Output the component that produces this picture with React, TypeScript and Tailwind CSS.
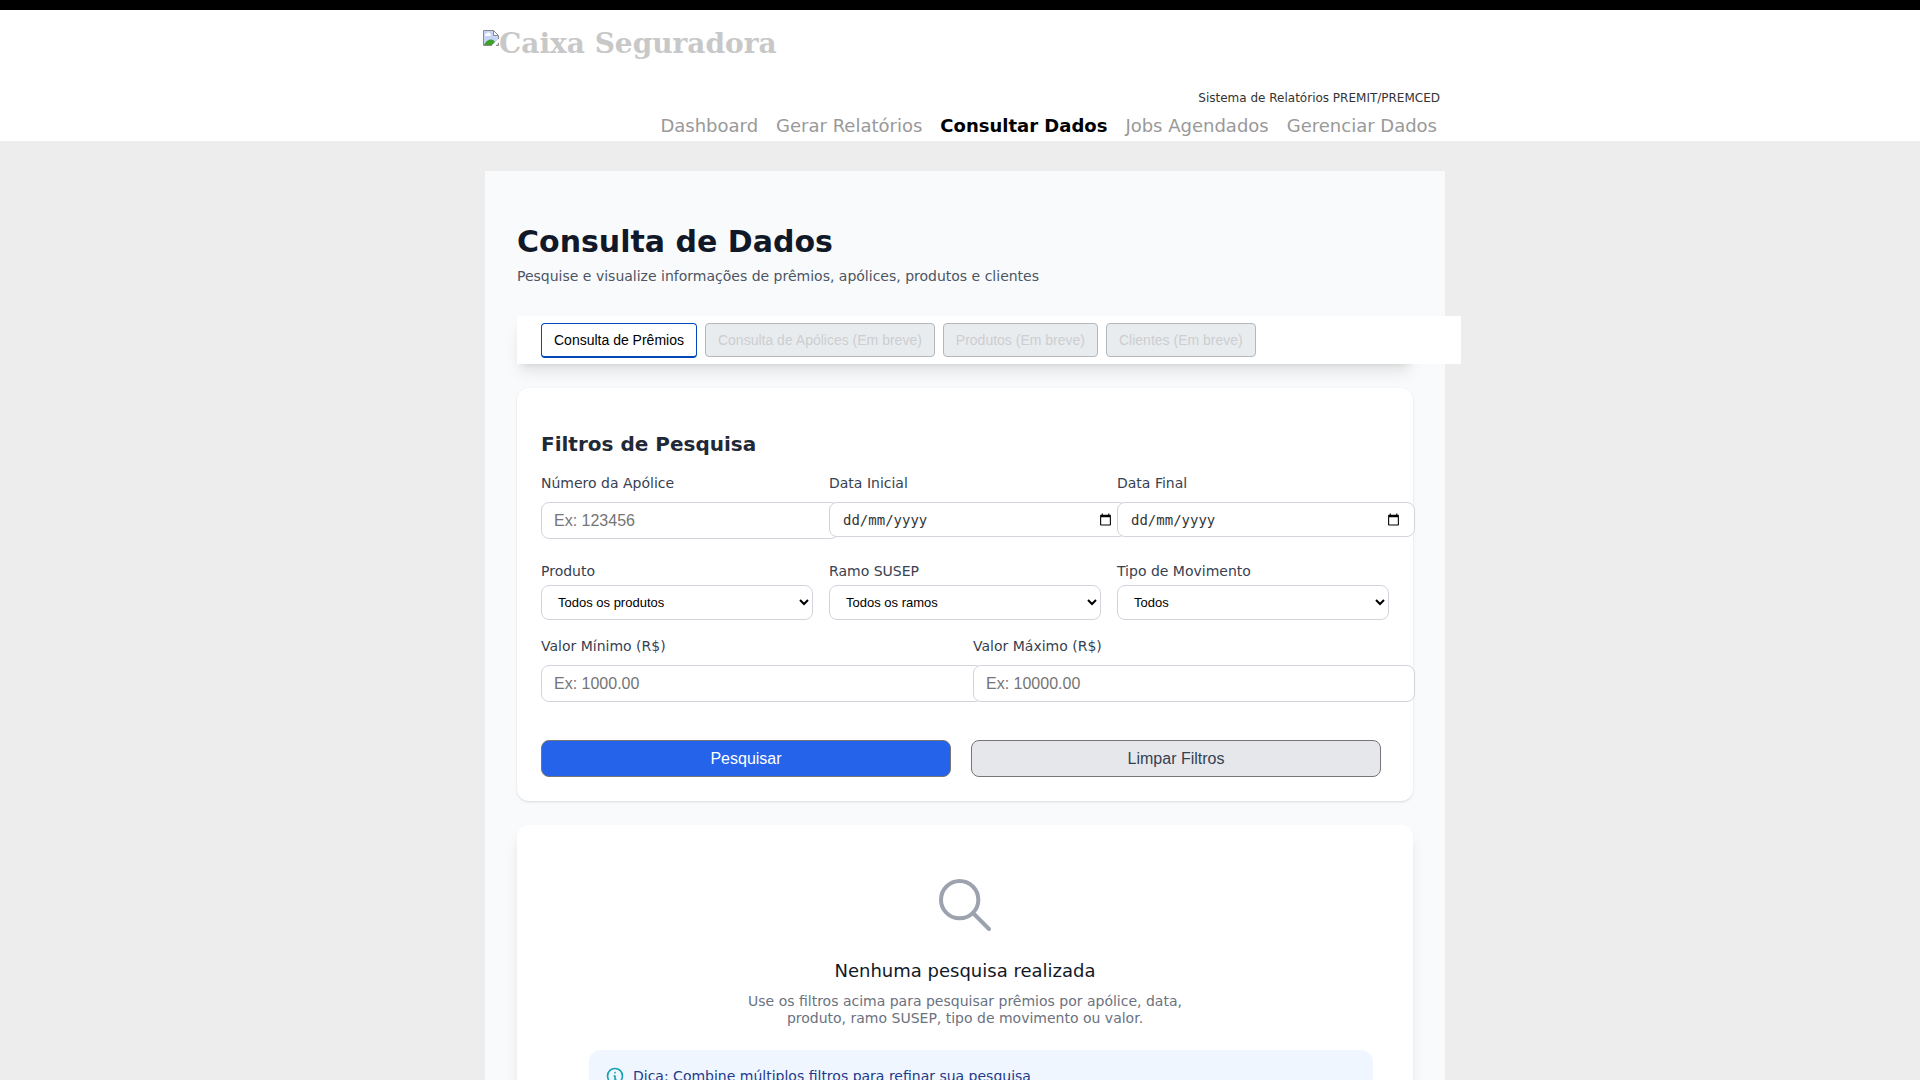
import { useState, type ReactNode } from 'react';

const navItems = ['Dashboard', 'Gerar Relatórios', 'Consultar Dados', 'Jobs Agendados', 'Gerenciar Dados'];

const tabs = [
  { label: 'Consulta de Prêmios', enabled: true },
  { label: 'Consulta de Apólices (Em breve)', enabled: false },
  { label: 'Produtos (Em breve)', enabled: false },
  { label: 'Clientes (Em breve)', enabled: false },
];

const ui = "font-['Liberation_Sans',Arial,sans-serif]";
const fieldBox = 'rounded-lg border border-[#d1d5db] bg-white';

function BrokenImageIcon() {
  return (
    <svg width="16" height="16" viewBox="0 0 16 16" className="mt-[6px] shrink-0" aria-hidden="true">
      <path d="M.5.5h10l5 5v10H.5z" fill="#c6d5f7" />
      <path d="M2 5.5a1.5 1.5 0 0 1 1.500-2 2 2 0 0 1 3.500 0 1.300 1.300 0 0 1 0 2.500H3z" fill="#fff" />
      <path d="M1 15c1-3 4-5.500 7-5.500 2.500 0 3.500 1.500 4 2.500L9 15z" fill="#3fa02c" />
      <path d="M16 8.500 8.500 16H12l4-4z" fill="#fff" />
      <path d="M10.500.5v5h5z" fill="#fff" />
      <path d="M9 15.500H.5V.5h10l5 5V9M10.500.5v5h5M13 15.500h2.500V13" fill="none" stroke="#8a8a8a" />
    </svg>
  );
}

function Field({ id, label, children }: { id: string; label: string; children: ReactNode }) {
  return (
    <div className="min-w-0">
      <label htmlFor={id} className="block text-sm leading-5 text-[#374151]">
        {label}
      </label>
      {children}
    </div>
  );
}

function TextField({ id, label, placeholder }: { id: string; label: string; placeholder: string }) {
  return (
    <Field id={id} label={label}>
      <input
        id={id}
        type="text"
        placeholder={placeholder}
        className={`mt-[9px] block h-[37px] w-[calc(100%+26px)] px-3 text-base placeholder:text-[#757575] ${fieldBox} ${ui}`}
      />
    </Field>
  );
}

function DateField({ id, label }: { id: string; label: string }) {
  return (
    <Field id={id} label={label}>
      <div className={`relative mt-[9px] flex h-[35px] w-[calc(100%+26px)] items-center pr-3.5 pl-[13px] ${fieldBox}`}>
        <input
          id={id}
          type="text"
          placeholder="dd/mm/yyyy"
          className="min-w-0 flex-1 bg-transparent font-['DejaVu_Sans_Mono',monospace] text-sm outline-none placeholder:text-[#333333]"
        />
        <button type="button" aria-label={`Abrir calendário: ${label}`}>
          <svg width="13" height="13" viewBox="0 0 24 24" aria-hidden="true">
            <path d="M20 3h-1V1h-2v2H7V1H5v2H4c-1.100 0-2 .9-2 2v16c0 1.100.9 2 2 2h16c1.100 0 2-.9 2-2V5c0-1.100-.9-2-2-2zm0 18H4V8h16v13z" />
          </svg>
        </button>
      </div>
    </Field>
  );
}

function SelectField({ id, label, option }: { id: string; label: string; option: string }) {
  return (
    <Field id={id} label={label}>
      <select id={id} className={`mt-1 block h-[35px] w-full px-3 text-[13px] text-black ${fieldBox} ${ui}`}>
        <option>{option}</option>
      </select>
    </Field>
  );
}

export default function App() {
  const [active, setActive] = useState('Consultar Dados');

  return (
    <div className="min-h-screen bg-[#ededed] font-['Verdana','DejaVu_Sans',sans-serif]">
      <header className="border-t-[10px] border-black bg-white">
        <div className="mx-auto flex max-w-[970px] flex-col pr-[5px] pl-2">
          <h1 className="flex pt-3.5 font-['Rockwell','DejaVu_Serif',serif] text-[28px] leading-10 font-bold text-[#c8c8c8]">
            <BrokenImageIcon />
            Caixa Seguradora
          </h1>
          <p className="mt-[26px] text-right text-xs leading-4 text-[#333333]">Sistema de Relatórios PREMIT/PREMCED</p>
          <nav className="flex flex-wrap justify-end gap-x-[18px] pt-[7px] pr-[3px] pb-[3px]">
            {navItems.map((item) => (
              <a
                key={item}
                href="#"
                onClick={() => setActive(item)}
                className={`text-lg leading-[25px] ${item === active ? 'font-bold text-black' : 'text-[#999999]'}`}
              >
                {item}
              </a>
            ))}
          </nav>
        </div>
      </header>

      <div className="mx-auto max-w-[970px] pt-[30px] pl-2.5">
        <main className="bg-[#f9fafb] px-8 pt-[51px] pb-8">
          <h2 className="text-[30px] leading-10 font-bold text-[#111827]">Consulta de Dados</h2>
          <p className="mt-1 text-sm leading-5 text-[#4b5563]">
            Pesquise e visualize informações de prêmios, apólices, produtos e clientes
          </p>

          <div className="mt-[30px] shadow-lg">
            <div className="flex w-[calc(100%+48px)] items-start gap-2 bg-white px-6 pt-[7px] pb-1.5">
              {tabs.map((tab) => (
                <button
                  key={tab.label}
                  type="button"
                  disabled={!tab.enabled}
                  className={`rounded border px-3 text-sm ${ui} ${
                    tab.enabled
                      ? 'h-[35px] border-b-2 border-[#0047bb] bg-white text-black'
                      : 'h-[34px] border-[#b5b8ba] bg-[#e9ecef] text-[#cccecf]'
                  }`}
                >
                  {tab.label}
                </button>
              ))}
            </div>
          </div>

          <form
            onSubmit={(e) => e.preventDefault()}
            className="mt-6 rounded-xl bg-white px-6 pt-[42px] pb-6 shadow-sm"
          >
            <h3 className="text-xl leading-7 font-bold text-[#1f2937]">Filtros de Pesquisa</h3>
            <div className="mt-[15px] grid grid-cols-3 gap-x-4">
              <TextField id="apolice" label="Número da Apólice" placeholder="Ex: 123456" />
              <DateField id="data-inicial" label="Data Inicial" />
              <DateField id="data-final" label="Data Final" />
            </div>
            <div className="mt-[22px] grid grid-cols-3 gap-x-4">
              <SelectField id="produto" label="Produto" option="Todos os produtos" />
              <SelectField id="ramo" label="Ramo SUSEP" option="Todos os ramos" />
              <SelectField id="movimento" label="Tipo de Movimento" option="Todos" />
            </div>
            <div className="mt-4 grid grid-cols-2 gap-x-4">
              <TextField id="valor-minimo" label="Valor Mínimo (R$)" placeholder="Ex: 1000.00" />
              <TextField id="valor-maximo" label="Valor Máximo (R$)" placeholder="Ex: 10000.00" />
            </div>
            <div className={`mt-[38px] grid grid-cols-2 gap-x-5 pr-2 text-base ${ui}`}>
              <button type="submit" className="h-[37px] rounded-lg border border-[#767676] bg-[#2563eb] text-white">
                Pesquisar
              </button>
              <button type="reset" className="h-[37px] rounded-lg border border-[#767676] bg-[#e5e7eb] text-[#374151]">
                Limpar Filtros
              </button>
            </div>
          </form>

          <section className="mt-6 flex flex-col items-center rounded-xl bg-white pt-12 pr-10 pb-12 pl-[72px] shadow-lg">
            <div className="flex flex-col items-center pr-8 text-center">
              <svg
                width="64"
                height="64"
                viewBox="0 0 24 24"
                fill="none"
                stroke="currentColor"
                strokeWidth="1.5"
                strokeLinecap="round"
                className="text-[#9ca3af]"
                aria-hidden="true"
              >
                <path d="M21 21l-6-6m2-5a7 7 0 11-14 0 7 7 0 0114 0z" />
              </svg>
              <h3 className="mt-5 text-lg leading-7 text-[#111827]">Nenhuma pesquisa realizada</h3>
              <p className="mt-2 max-w-md text-sm leading-[17px] text-[#6b7280]">
                Use os filtros acima para pesquisar prêmios por apólice, data, produto, ramo SUSEP, tipo de movimento ou
                valor.
              </p>
            </div>
            <div className="mt-[23px] flex w-full items-start gap-2 rounded-xl bg-[#eff6ff] p-4">
              <svg
                width="20"
                height="20"
                viewBox="0 0 24 24"
                fill="none"
                stroke="#17a2b8"
                strokeWidth="2"
                strokeLinecap="round"
                strokeLinejoin="round"
                className="shrink-0"
                aria-hidden="true"
              >
                <path d="M13 16h-1v-4h-1m1-4h.01M21 12a9 9 0 11-18 0 9 9 0 0118 0z" />
              </svg>
              <p className="text-sm leading-5 text-[#1e3a8a]">Dica: Combine múltiplos filtros para refinar sua pesquisa</p>
            </div>
          </section>
        </main>
      </div>
    </div>
  );
}
